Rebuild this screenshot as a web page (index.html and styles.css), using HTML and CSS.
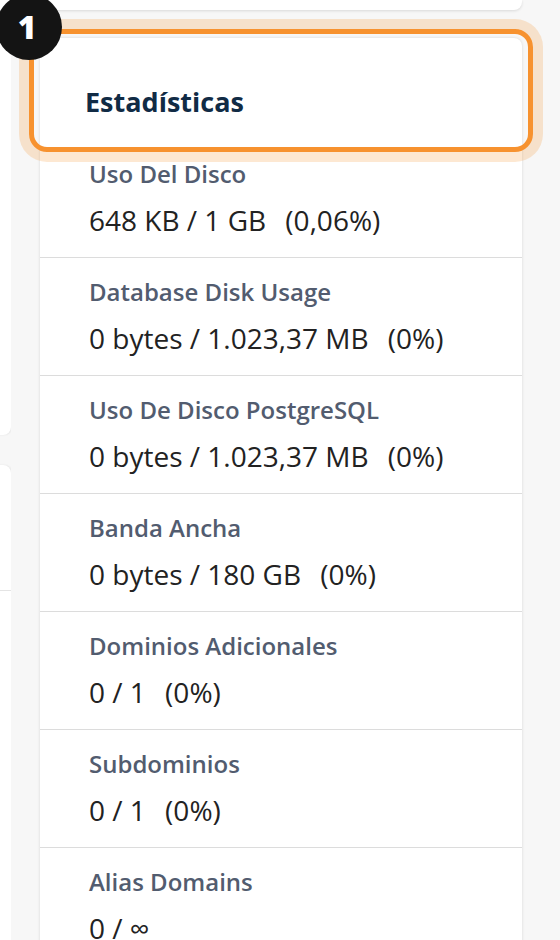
FILE: index.html
```html
<!DOCTYPE html>
<html lang="es">
<head>
<meta charset="utf-8">
<title>Estadísticas</title>
<link rel="stylesheet" href="styles.css">
</head>
<body>
<div class="page">
  <aside class="side">
    <div class="side-card side-card-top"></div>
    <div class="side-card side-card-bottom">
      <div class="side-row"></div>
    </div>
  </aside>
  <main class="main">
    <div class="stub-card"></div>
    <section class="stats-card">
      <div class="highlight"></div>
      <div class="badge">1</div>
      <h2 class="stats-title">Estadísticas</h2>
      <div class="stat">
        <div class="stat-label">Uso Del Disco</div>
        <div class="stat-value">648 KB / 1 GB <span class="pct">(0,06%)</span></div>
      </div>
      <div class="stat">
        <div class="stat-label">Database Disk Usage</div>
        <div class="stat-value">0 bytes / 1.023,37 MB <span class="pct">(0%)</span></div>
      </div>
      <div class="stat">
        <div class="stat-label">Uso De Disco PostgreSQL</div>
        <div class="stat-value">0 bytes / 1.023,37 MB <span class="pct">(0%)</span></div>
      </div>
      <div class="stat">
        <div class="stat-label">Banda Ancha</div>
        <div class="stat-value">0 bytes / 180 GB <span class="pct">(0%)</span></div>
      </div>
      <div class="stat">
        <div class="stat-label">Dominios Adicionales</div>
        <div class="stat-value">0 / 1 <span class="pct">(0%)</span></div>
      </div>
      <div class="stat">
        <div class="stat-label">Subdominios</div>
        <div class="stat-value">0 / 1 <span class="pct">(0%)</span></div>
      </div>
      <div class="stat">
        <div class="stat-label">Alias Domains</div>
        <div class="stat-value">0 / ∞</div>
      </div>
    </section>
  </main>
</div>
</body>
</html>
```
FILE: styles.css
```css
html, body {
  margin: 0;
  padding: 0;
  background: #f7f7f7;
  font-family: "Open Sans", "Liberation Sans", sans-serif;
  overflow: hidden;
  height: 940px;
}

.page {
  display: flex;
  gap: 29px;
  align-items: flex-start;
}

.side {
  width: 11px;
  overflow: hidden;
  display: flex;
  flex-direction: column;
  gap: 30px;
  flex-shrink: 0;
}

.side-card {
  width: 300px;
  margin-left: -289px;
  background: #ffffff;
  box-shadow: 1px 0 2px rgba(0,0,0,0.08);
}

.side-card-top {
  height: 435px;
  border-radius: 0 0 8px 0;
}

.side-card-bottom {
  height: 600px;
  border-radius: 0 8px 0 0;
}

.side-row {
  height: 125px;
  border-bottom: 1px solid #e4e4e4;
}

.main {
  width: 482px;
  display: flex;
  flex-direction: column;
  gap: 28px;
  flex-shrink: 0;
}

.stub-card {
  height: 10px;
  background: #ffffff;
  border-radius: 0 0 8px 8px;
  box-shadow: 0 1px 3px rgba(0,0,0,0.12);
}

.stats-card {
  position: relative;
  background: #ffffff;
  border-radius: 8px 8px 0 0;
  box-shadow: 0 0 3px rgba(0,0,0,0.14);
  height: 940px;
}

.highlight {
  position: absolute;
  left: -11px;
  top: -9px;
  width: 504px;
  height: 123px;
  box-sizing: border-box;
  border: 5px solid #f7922f;
  border-radius: 18px;
  box-shadow: 0 0 0 10px rgba(248, 150, 50, 0.22);
  pointer-events: none;
}

.badge {
  position: absolute;
  left: -44px;
  top: -44px;
  width: 66px;
  height: 66px;
  border-radius: 50%;
  background: #141414;
  color: #ffffff;
  font-weight: 800;
  font-size: 32px;
  line-height: 66px;
  text-align: center;
  text-indent: -4px;
}

.stats-title {
  margin: 0;
  padding: 48px 0 22px 45px;
  font-size: 27px;
  line-height: 32px;
  font-weight: 700;
  color: #112b45;
}

.stat {
  padding: 19px 0 20px 49px;
  border-bottom: 1px solid #dcdcdc;
}

.stat-label {
  font-size: 24px;
  line-height: 30px;
  font-weight: 600;
  color: #525c6f;
}

.stat-value {
  margin-top: 14px;
  font-size: 28px;
  line-height: 34px;
  color: #222222;
  white-space: pre;
}

.pct {
  margin-left: 12px;
}
```
